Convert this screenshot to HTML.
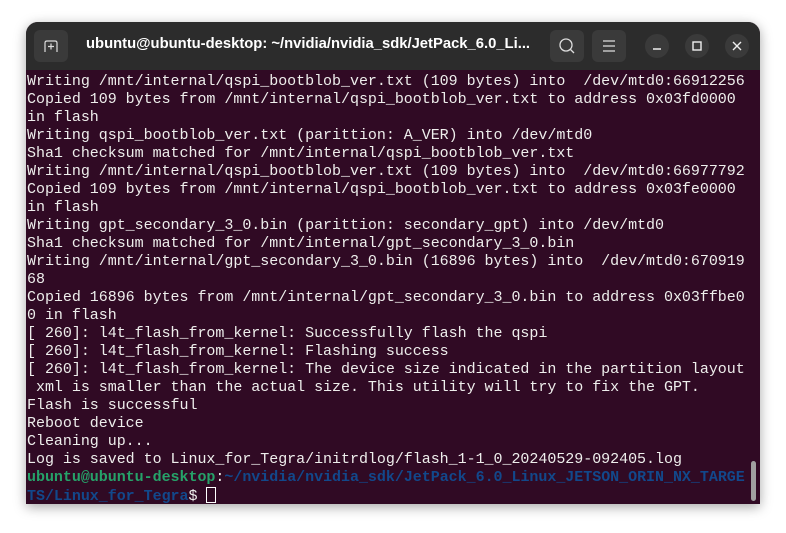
<!DOCTYPE html>
<html><head><meta charset="utf-8"><style>
html,body{margin:0;padding:0;background:#fff;width:786px;height:533px;overflow:hidden}
.win{position:absolute;left:26px;top:22px;width:734px;height:482px;border-radius:12px 12px 0 0;overflow:hidden;box-shadow:0 3px 12px rgba(0,0,0,.35);background:#300a24}
.tb{position:absolute;left:0;top:0;width:734px;height:48px;background:#2c2c2c}
.btn{position:absolute;top:8px;width:34px;height:32px;border-radius:6px;background:#3a3a3a}
.circ{position:absolute;top:12px;width:24px;height:24px;border-radius:12px;background:#3a3a3a}
.title{position:absolute;left:60px;top:14px;color:#fff;font:bold 14.8px "Liberation Sans",sans-serif;white-space:nowrap}
pre{position:absolute;left:1px;top:51px;margin:0;font:15px/18px "Liberation Mono",monospace;letter-spacing:-0.03px;color:#eeeeec;white-space:pre}
.g{color:#26a269;font-weight:bold}.b{color:#12488b;font-weight:bold}
.cur{display:inline-block;height:16px;border:1px solid #fff;vertical-align:-3px;box-sizing:border-box;width:10px}
.sb{position:absolute;left:725px;top:439px;width:5px;height:40px;border-radius:3px;background:#a0a0a0}
</style></head><body>
<div class="win">
<div class="tb">
<div class="btn" style="left:8px"><svg width="34" height="32"><path d="M11 22V13q0-2 2-2h8q2 0 2 2v9" fill="none" stroke="#ddd" stroke-width="1.2"/><path d="M17 13.5v6M14 16.5h6" stroke="#ddd" stroke-width="1.2"/></svg></div>
<div class="title">ubuntu@ubuntu-desktop: ~/nvidia/nvidia_sdk/JetPack_6.0_Li...</div>
<div class="btn" style="left:524px"><svg width="34" height="32"><circle cx="16" cy="15" r="6" fill="none" stroke="#ddd" stroke-width="1.3"/><path d="M20.5 19.5l3.5 3.5" stroke="#ddd" stroke-width="1.3"/></svg></div>
<div class="btn" style="left:566px"><svg width="34" height="32"><path d="M11 11h12M11 16h12M11 21h12" stroke="#ddd" stroke-width="1.2"/></svg></div>
<div class="circ" style="left:619px"><svg width="24" height="24"><path d="M8 15h8" stroke="#eee" stroke-width="1.4"/></svg></div>
<div class="circ" style="left:659px"><svg width="24" height="24"><rect x="8" y="8" width="8" height="8" fill="none" stroke="#eee" stroke-width="1.4"/></svg></div>
<div class="circ" style="left:699px"><svg width="24" height="24"><path d="M8 8l8 8M16 8l-8 8" stroke="#eee" stroke-width="1.4"/></svg></div>
</div>
<pre>Writing /mnt/internal/qspi_bootblob_ver.txt (109 bytes) into  /dev/mtd0:66912256
Copied 109 bytes from /mnt/internal/qspi_bootblob_ver.txt to address 0x03fd0000
in flash
Writing qspi_bootblob_ver.txt (parittion: A_VER) into /dev/mtd0
Sha1 checksum matched for /mnt/internal/qspi_bootblob_ver.txt
Writing /mnt/internal/qspi_bootblob_ver.txt (109 bytes) into  /dev/mtd0:66977792
Copied 109 bytes from /mnt/internal/qspi_bootblob_ver.txt to address 0x03fe0000
in flash
Writing gpt_secondary_3_0.bin (parittion: secondary_gpt) into /dev/mtd0
Sha1 checksum matched for /mnt/internal/gpt_secondary_3_0.bin
Writing /mnt/internal/gpt_secondary_3_0.bin (16896 bytes) into  /dev/mtd0:670919
68
Copied 16896 bytes from /mnt/internal/gpt_secondary_3_0.bin to address 0x03ffbe0
0 in flash
[ 260]: l4t_flash_from_kernel: Successfully flash the qspi
[ 260]: l4t_flash_from_kernel: Flashing success
[ 260]: l4t_flash_from_kernel: The device size indicated in the partition layout
 xml is smaller than the actual size. This utility will try to fix the GPT.
Flash is successful
Reboot device
Cleaning up...
Log is saved to Linux_for_Tegra/initrdlog/flash_1-1_0_20240529-092405.log
<span class="g">ubuntu@ubuntu-desktop</span>:<span class="b">~/nvidia/nvidia_sdk/JetPack_6.0_Linux_JETSON_ORIN_NX_TARGE
TS/Linux_for_Tegra</span>$ <span class="cur"></span></pre>
<div class="sb"></div>
</div>
</body></html>
